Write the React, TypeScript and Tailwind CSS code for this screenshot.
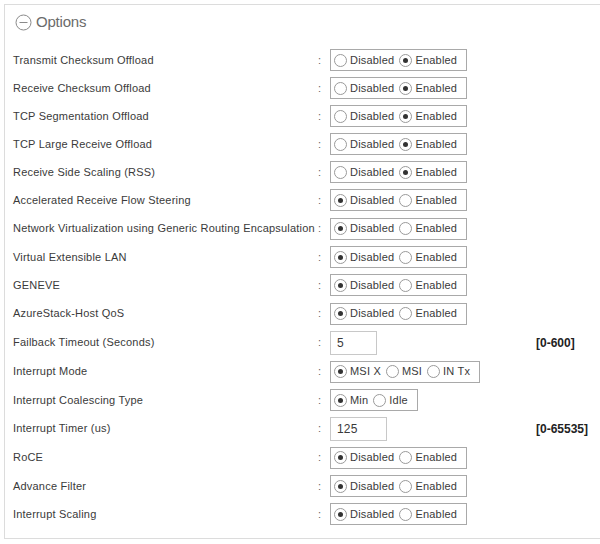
import React from "react";

type Row =
  | { kind: "radio"; label: string; options: string[]; selected: number; h: number }
  | { kind: "text"; label: string; value: string; w: number; range: string; h: number };

const rows: Row[] = [
  { kind: "radio", label: "Transmit Checksum Offload", options: ["Disabled", "Enabled"], selected: 1, h: 28 },
  { kind: "radio", label: "Receive Checksum Offload", options: ["Disabled", "Enabled"], selected: 1, h: 28 },
  { kind: "radio", label: "TCP Segmentation Offload", options: ["Disabled", "Enabled"], selected: 1, h: 28 },
  { kind: "radio", label: "TCP Large Receive Offload", options: ["Disabled", "Enabled"], selected: 1, h: 28 },
  { kind: "radio", label: "Receive Side Scaling (RSS)", options: ["Disabled", "Enabled"], selected: 1, h: 28 },
  { kind: "radio", label: "Accelerated Receive Flow Steering", options: ["Disabled", "Enabled"], selected: 0, h: 28 },
  { kind: "radio", label: "Network Virtualization using Generic Routing Encapsulation", options: ["Disabled", "Enabled"], selected: 0, h: 29 },
  { kind: "radio", label: "Virtual Extensible LAN", options: ["Disabled", "Enabled"], selected: 0, h: 28 },
  { kind: "radio", label: "GENEVE", options: ["Disabled", "Enabled"], selected: 0, h: 28 },
  { kind: "radio", label: "AzureStack-Host QoS", options: ["Disabled", "Enabled"], selected: 0, h: 29 },
  { kind: "text", label: "Failback Timeout (Seconds)", value: "5", w: 47, range: "[0-600]", h: 29 },
  { kind: "radio", label: "Interrupt Mode", options: ["MSI X", "MSI", "IN Tx"], selected: 0, h: 29 },
  { kind: "radio", label: "Interrupt Coalescing Type", options: ["Min", "Idle"], selected: 0, h: 28 },
  { kind: "text", label: "Interrupt Timer (us)", value: "125", w: 57, range: "[0-65535]", h: 29 },
  { kind: "radio", label: "RoCE", options: ["Disabled", "Enabled"], selected: 0, h: 29 },
  { kind: "radio", label: "Advance Filter", options: ["Disabled", "Enabled"], selected: 0, h: 28 },
  { kind: "radio", label: "Interrupt Scaling", options: ["Disabled", "Enabled"], selected: 0, h: 28 },
];

function Radio({ on }: { on: boolean }) {
  return (
    <span className="inline-flex h-[13px] w-[13px] items-center justify-center rounded-full border border-[#9a9a9a] bg-white">
      {on && <span className="h-[5px] w-[5px] rounded-full bg-[#333]" />}
    </span>
  );
}

export default function App() {
  return (
    <div
      className="h-[544px] w-[600px] overflow-hidden bg-white pl-[4px] pt-[4px] text-[#3a3a3a]"
      style={{ fontFamily: '"Liberation Sans", Arial, sans-serif' }}
    >
      <div className="h-[535px] w-[600px] border border-r-0 border-[#dcdcdc]">
        <div className="flex h-[34px] items-center pl-[10px] text-[15px] text-[#6b6b6b]">
          <svg width="17" height="17" viewBox="0 0 17 17" className="mr-[4px]">
            <circle cx="8.5" cy="8.5" r="7.5" fill="none" stroke="#8a8a8a" strokeWidth="1" />
            <line x1="4.5" y1="8.5" x2="12.5" y2="8.5" stroke="#8a8a8a" strokeWidth="1" />
          </svg>
          <span className="tracking-[-0.2px]">Options</span>
        </div>
        <div className="flex flex-col pl-[8px] pt-[7px] text-[11px] tracking-[0.2px]">
          {rows.map((r, i) => (
            <div key={i} className="flex items-center" style={{ height: r.h }}>
              <span className="w-[305px] shrink-0 whitespace-nowrap">{r.label}</span>
              <span className="w-[4px] shrink-0 text-[#666]">:</span>
              <div className="ml-[8px] flex w-[206px] shrink-0 items-center">
                {r.kind === "radio" ? (
                  <div className="flex h-[22px] items-center gap-[5px] border border-[#a9a9a9] pl-[3px] pr-[9px]">
                    {r.options.map((o, j) => (
                      <span key={j} className="flex items-center gap-[3px]">
                        <Radio on={j === r.selected} />
                        <span>{o}</span>
                      </span>
                    ))}
                  </div>
                ) : (
                  <div
                    className="flex h-[24px] items-center border border-[#c8c8c8] pl-[6px] text-[12px]"
                    style={{ width: r.w }}
                  >
                    {r.value}
                  </div>
                )}
              </div>
              {r.kind === "text" && (
                <span className="text-[12px] font-bold tracking-normal text-[#222]">{r.range}</span>
              )}
            </div>
          ))}
        </div>
      </div>
    </div>
  );
}
